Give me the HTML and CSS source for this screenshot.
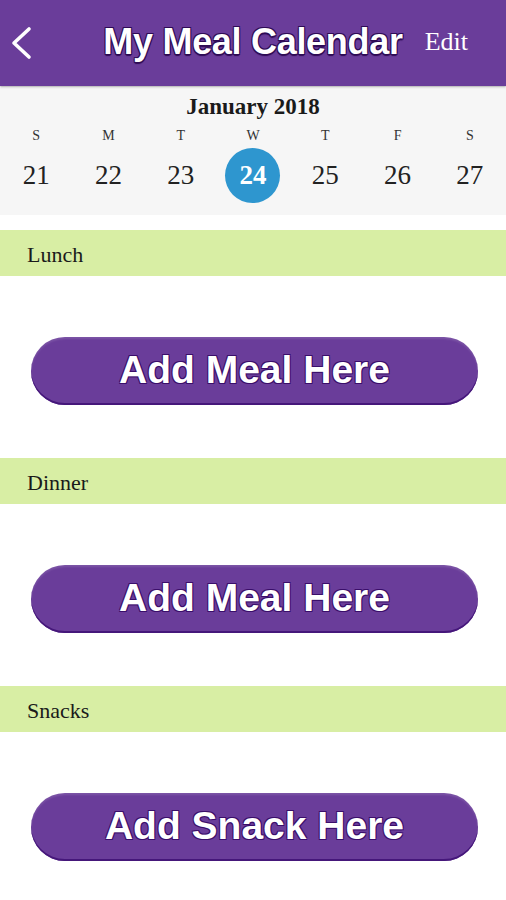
FILE: index.html
```html
<!DOCTYPE html>
<html>
<head>
<meta charset="utf-8">
<link rel="stylesheet" href="styles.css">
</head>
<body>
<header class="topbar">
  <div class="back">
    <svg width="24" height="34" viewBox="0 0 24 34"><path d="M19 3 L4 17 L19 31" fill="none" stroke="#fff" stroke-width="3.6" stroke-linecap="round" stroke-linejoin="round"/></svg>
  </div>
  <h1 class="title">My Meal Calendar</h1>
  <div class="edit">Edit</div>
</header>
<section class="calendar">
  <div class="month">January 2018</div>
  <div class="week">
    <div class="day"><span class="dow">S</span><span class="num">21</span></div>
    <div class="day"><span class="dow">M</span><span class="num">22</span></div>
    <div class="day"><span class="dow">T</span><span class="num">23</span></div>
    <div class="day"><span class="dow">W</span><span class="num selected">24</span></div>
    <div class="day"><span class="dow">T</span><span class="num">25</span></div>
    <div class="day"><span class="dow">F</span><span class="num">26</span></div>
    <div class="day"><span class="dow">S</span><span class="num">27</span></div>
  </div>
</section>
<main class="meals">
  <section class="meal">
    <div class="band">Lunch</div>
    <button class="add">Add Meal Here</button>
  </section>
  <section class="meal">
    <div class="band">Dinner</div>
    <button class="add">Add Meal Here</button>
  </section>
  <section class="meal">
    <div class="band">Snacks</div>
    <button class="add">Add Snack Here</button>
  </section>
</main>
</body>
</html>
```
FILE: styles.css
```css
* { box-sizing: border-box; }
html, body { margin: 0; padding: 0; background: #fff; }
body { width: 506px; height: 900px; overflow: hidden; font-family: "Liberation Serif", "Times New Roman", serif; }

.topbar {
  height: 86px;
  background: #6a3d9a;
  display: grid;
  grid-template-columns: 1fr auto 1fr;
  align-items: center;
  box-shadow: 0 1px 2px rgba(0,0,0,0.35);
  position: relative;
  z-index: 1;
}
.back { padding-left: 10px; display: flex; align-items: center; margin-top: -1px; }
.title {
  margin: 0;
  font-family: "Liberation Sans", Arial, sans-serif;
  font-weight: bold;
  font-size: 36px;
  color: #fff;
  letter-spacing: -0.3px;
  text-shadow: 1px 1px 0 #2e0b55, -1px 1px 0 #2e0b55, 1px -1px 0 #2e0b55, -1px -1px 0 #2e0b55, 0 2px 1px #2e0b55;
  margin-top: -2px;
}
.edit {
  justify-self: start;
  margin-left: 22px;
  color: #fff;
  font-size: 26px;
  margin-top: -2px;
}

.calendar {
  margin-top: 2px;
  height: 127px;
  background: #f6f6f6;
  padding-top: 6px;
}
.month {
  text-align: center;
  font-weight: bold;
  font-size: 23px;
  color: #1a1a1a;
  line-height: 26px;
}
.week {
  display: grid;
  grid-template-columns: repeat(7, 1fr);
  margin-top: 8px;
}
.day { display: flex; flex-direction: column; align-items: center; }
.dow { font-size: 14px; line-height: 16px; color: #333; }
.num {
  margin-top: 4px;
  width: 55px;
  height: 55px;
  border-radius: 50%;
  display: flex;
  align-items: center;
  justify-content: center;
  font-size: 27px;
  color: #222;
}
.num.selected { background: #2e96cf; color: #fff; font-weight: bold; }

.meals { padding-top: 15px; }
.meal { padding-bottom: 53px; }
.band {
  height: 46px;
  background: #d8eea4;
  padding-left: 27px;
  padding-top: 3px;
  display: flex;
  align-items: center;
  font-size: 22px;
  color: #1a1a1a;
}
.add {
  display: block;
  margin: 61px 0 0 31px;
  width: 447px;
  height: 68px;
  border: none;
  border-radius: 34px;
  background: #6a3d9a;
  box-shadow: inset 0 -2px 0 #45177a, inset 0 2px 2px rgba(255,255,255,0.12);
  color: #fff;
  font-family: "Liberation Sans", Arial, sans-serif;
  font-weight: bold;
  font-size: 39px;
  text-shadow: 1px 1px 0 #3a0e6a, -1px 1px 0 #3a0e6a, 1px -1px 0 #3a0e6a, -1px -1px 0 #3a0e6a;
  padding: 0;
  padding-bottom: 2px;
}
```
